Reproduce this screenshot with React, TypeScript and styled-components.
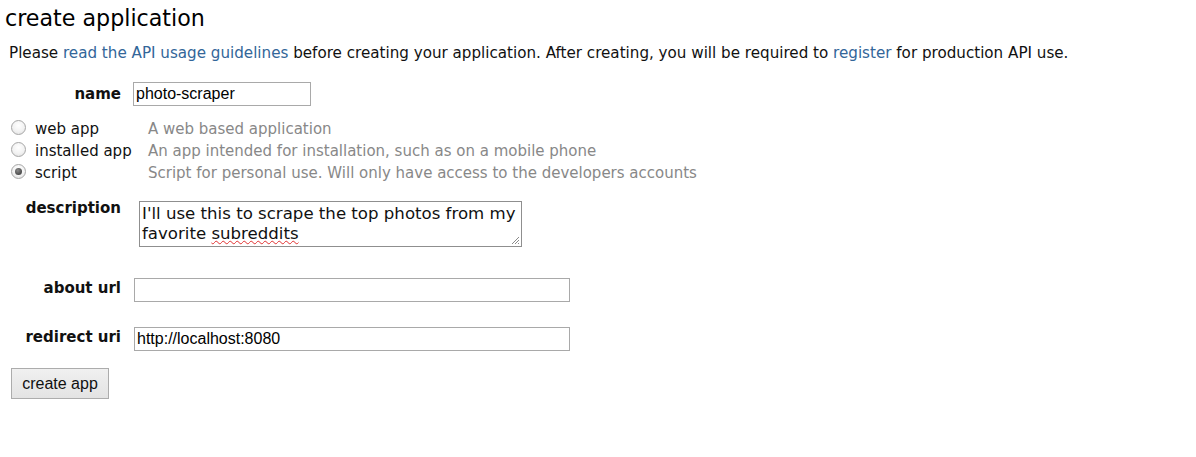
import * as React from "react";
import styled, { createGlobalStyle } from "styled-components";

const GlobalStyle = createGlobalStyle`
  html, body {
    margin: 0;
    padding: 0;
    background: #fff;
  }
  body {
    font-family: "DejaVu Sans", Verdana, sans-serif;
    color: #000;
  }
`;

const Page = styled.div`
  padding: 4px 5px 0 5px;
`;

const Title = styled.h1`
  margin: 0;
  font-size: 22.2px;
  font-weight: normal;
  line-height: 28px;
  color: #000;
`;

const Intro = styled.p`
  margin: 11px 0 0 4px;
  font-size: 15.15px;
  line-height: 20px;
  color: #111;
`;

const TextLink = styled.a`
  color: #369;
  text-decoration: none;
`;

const Form = styled.form`
  display: flex;
  flex-direction: column;
  margin-top: 19px;
`;

const FieldRow = styled.div<{ $top: number; $align?: string }>`
  display: flex;
  align-items: ${(p) => p.$align || "center"};
  margin-top: ${(p) => p.$top}px;
`;

const Label = styled.label<{ $offset?: number }>`
  width: 116px;
  text-align: right;
  font-weight: bold;
  font-size: 15px;
  color: #111;
  margin-top: ${(p) => p.$offset || 0}px;
`;

const TextInput = styled.input<{ $width: number; $gap: number }>`
  box-sizing: border-box;
  width: ${(p) => p.$width}px;
  height: 24px;
  margin-left: ${(p) => p.$gap}px;
  padding: 0 2px;
  border: 1px solid #a9a9a9;
  font-family: "Liberation Sans", Arial, sans-serif;
  font-size: 16px;
  color: #000;
  outline: none;
`;

const RadioList = styled.div`
  display: flex;
  flex-direction: column;
  margin-top: 12px;
`;

const RadioRow = styled.div`
  display: flex;
  align-items: center;
  height: 22px;
`;

const RadioDot = styled.span<{ $checked?: boolean }>`
  box-sizing: border-box;
  position: relative;
  width: 15px;
  height: 15px;
  margin-left: 6px;
  border-radius: 50%;
  border: 1px solid #a6a6a6;
  background: radial-gradient(circle at 50% 35%, #ffffff 0%, #f2f2f2 55%, #dcdcdc 100%);
  flex: none;
  margin-top: -4px;

  &::after {
    content: "";
    display: ${(p) => (p.$checked ? "block" : "none")};
    position: absolute;
    left: 3px;
    top: 3px;
    width: 7px;
    height: 7px;
    border-radius: 50%;
    background: radial-gradient(circle at 40% 35%, #8a8a8a 0%, #4a4a4a 70%);
  }
`;

const RadioLabel = styled.span`
  width: 113px;
  margin-left: 9px;
  font-size: 15px;
  color: #111;
`;

const RadioHint = styled.span`
  font-size: 15px;
  color: #888;
`;

const TextBox = styled.div`
  position: relative;
  box-sizing: border-box;
  width: 383px;
  height: 46px;
  margin-left: 18px;
  padding: 2px 2px 0 2px;
  border: 1px solid #8f8f8f;
  font-size: 16.6px;
  line-height: 20px;
  color: #111;
`;

const Misspelled = styled.span`
  text-decoration: underline wavy #e03030;
  text-decoration-thickness: 1px;
  text-underline-offset: 1px;
`;

const Grip = styled.svg`
  position: absolute;
  right: 1px;
  bottom: 1px;
`;

const SubmitButton = styled.button`
  box-sizing: border-box;
  align-self: flex-start;
  width: 98px;
  height: 31px;
  margin: 17px 0 0 6px;
  border: 1px solid #acacac;
  border-radius: 0;
  background: linear-gradient(#f0f0f0, #e3e3e3);
  font-family: "Liberation Sans", Arial, sans-serif;
  font-size: 16px;
  color: #111;
  padding: 0;
`;

const kinds = [
  { label: "web app", hint: "A web based application" },
  { label: "installed app", hint: "An app intended for installation, such as on a mobile phone" },
  { label: "script", hint: "Script for personal use. Will only have access to the developers accounts", checked: true },
];

export default function App() {
  return (
    <Page>
      <GlobalStyle />
      <Title>create application</Title>
      <Intro>
        Please <TextLink href="#">read the API usage guidelines</TextLink> before creating your application. After
        creating, you will be required to <TextLink href="#">register</TextLink> for production API use.
      </Intro>
      <Form onSubmit={(e) => e.preventDefault()}>
        <FieldRow $top={0}>
          <Label>name</Label>
          <TextInput $width={178} $gap={12} defaultValue="photo-scraper" />
        </FieldRow>
        <RadioList>
          {kinds.map((k) => (
            <RadioRow key={k.label}>
              <RadioDot $checked={k.checked} />
              <RadioLabel>{k.label}</RadioLabel>
              <RadioHint>{k.hint}</RadioHint>
            </RadioRow>
          ))}
        </RadioList>
        <FieldRow $top={17} $align="flex-start">
          <Label $offset={-2}>description</Label>
          <TextBox>
            I'll use this to scrape the top photos from my favorite <Misspelled>subreddits</Misspelled>
            <Grip width="10" height="10" viewBox="0 0 10 10">
              <path d="M9 2 L2 9 M9 5 L5 9 M9 8 L8 9" stroke="#8a8a8a" strokeWidth="1" />
            </Grip>
          </TextBox>
        </FieldRow>
        <FieldRow $top={31} $align="flex-start">
          <Label $offset={1}>about url</Label>
          <TextInput $width={436} $gap={13} />
        </FieldRow>
        <FieldRow $top={25} $align="flex-start">
          <Label $offset={1}>redirect uri</Label>
          <TextInput $width={436} $gap={13} defaultValue="http://localhost:8080" />
        </FieldRow>
        <SubmitButton type="submit">create app</SubmitButton>
      </Form>
    </Page>
  );
}
